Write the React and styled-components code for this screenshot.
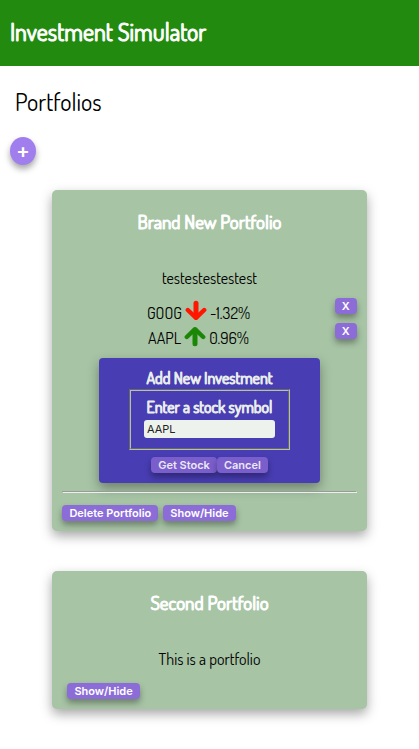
import React, { useState } from "react";
import styled, { createGlobalStyle } from "styled-components";

const GlobalStyle = createGlobalStyle`
  * { box-sizing: border-box; }
  body {
    margin: 0;
    background: #fff;
    color: #000;
    font-family: Dosis, "Liberation Sans Narrow", Lato, sans-serif;
    font-size: 16px;
    line-height: 20px;
  }
`;

const Header = styled.header`
  background: #228b0f;
  color: #fff;
  padding: 16px 10px 18px;
`;

const SiteTitle = styled.h1`
  margin: 0;
  font-size: 24px;
  line-height: 32px;
  font-weight: 400;
  -webkit-text-stroke: 1px;
`;

const PageTitle = styled.h2`
  margin: 20px 15px 19px;
  font-size: 24px;
  line-height: 32px;
  font-weight: 400;
`;

const Button = styled.button`
  height: 16px;
  padding: 0 7px;
  border: 0;
  border-radius: 4px;
  background: #8c6dd7;
  color: #fff;
  font: 600 11px/16px Inter, sans-serif;
  box-shadow: 0 4px 6px rgba(0, 0, 0, 0.35);
  cursor: pointer;
`;

const AddButton = styled(Button)`
  display: flex;
  align-items: center;
  justify-content: center;
  width: 26px;
  height: 28px;
  margin: 0 10px;
  padding: 0;
  border-radius: 50%;
  background: #a17eee;
  font-size: 20px;
`;

const CardList = styled.main`
  display: flex;
  flex-direction: column;
  align-items: center;
  gap: 40px;
  padding: 25px 0 40px;
`;

const Card = styled.section`
  width: 75%;
  padding: 19px 10px 10px;
  border-radius: 5px;
  background: #a7c4a5;
  box-shadow: 0 5px 12px rgba(0, 0, 0, 0.35);
`;

const CardTitle = styled.h3`
  margin: 0 0 34px;
  color: #fff;
  font-size: 19px;
  line-height: 26px;
  font-weight: 400;
  -webkit-text-stroke: 1px;
  text-align: center;
`;

const Description = styled.p`
  margin: 0;
  line-height: 18px;
  text-align: center;
`;

const Holdings = styled.ul`
  margin: 11px 0 10px;
  padding: 0;
  list-style: none;
`;

const Holding = styled.li`
  display: flex;
  align-items: flex-start;
  height: 25px;
`;

const Quote = styled.span`
  display: flex;
  flex: 1;
  align-items: center;
  justify-content: center;
  gap: 3px;
  height: 25px;
  padding-top: 4px;
`;

const ArrowIcon = styled.svg`
  width: 22px;
  height: 22px;
  margin-bottom: 4px;
  fill: none;
  stroke: ${(p) => (p.$up ? "#1c8707" : "#ff1500")};
  stroke-linecap: round;
  stroke-linejoin: round;
`;

const InvestmentForm = styled.form`
  display: flex;
  flex-direction: column;
  align-items: center;
  width: 75%;
  margin: 0 auto;
  padding: 9px 10px 10px;
  border-radius: 4px;
  background: #483db3;
  color: #e9eeec;
  box-shadow: 0 5px 12px rgba(0, 0, 0, 0.35);
`;

const FormTitle = styled.h4`
  margin: 0;
  font-size: 16px;
  line-height: 22px;
  font-weight: 400;
  -webkit-text-stroke: 1px;
`;

const FieldGroup = styled.fieldset`
  display: flex;
  flex-direction: column;
  align-items: center;
  gap: 2px;
  width: 80%;
  min-width: 0;
  margin: 0 0 7px;
  padding: 5px 10px 10px;
  border: 2px groove #b8beb6;
`;

const Label = styled.label`
  font-size: 16px;
  line-height: 22px;
  font-weight: 400;
  -webkit-text-stroke: 1px;
  white-space: nowrap;
`;

const SymbolInput = styled.input`
  width: 131px;
  height: 18px;
  padding: 0 3px;
  border: 0;
  border-radius: 3px;
  background: #edf2ec;
  color: #222;
  font: 11px/18px Inter, sans-serif;
`;

const FormActions = styled.div`
  display: flex;
  ${Button} { background: #7a5ecb; color: #eae8f6; }
`;

const Divider = styled.hr`
  margin: 8px 0 12px;
  border: 1px inset #eee;
`;

const CardActions = styled.footer`
  display: flex;
  gap: 5px;
  padding: ${(p) => (p.$inset ? "15px 5px 0" : "0")};
`;

const holdings = [
  { symbol: "GOOG", change: -1.32 },
  { symbol: "AAPL", change: 0.96 },
];

function Arrow({ up }) {
  return (
    <ArrowIcon viewBox="0 0 22 22" $up={up} aria-hidden="true">
      <path d={up ? "M11 18.7V5" : "M11 3.3V17"} strokeWidth="5" />
      <path d={up ? "M2.8 12L11 4.2L19.2 12" : "M2.8 10L11 17.8L19.2 10"} strokeWidth="4.4" />
    </ArrowIcon>
  );
}

export default function App() {
  const [symbol, setSymbol] = useState("AAPL");
  return (
    <>
      <GlobalStyle />
      <Header>
        <SiteTitle>Investment Simulator</SiteTitle>
      </Header>
      <PageTitle>Portfolios</PageTitle>
      <AddButton aria-label="Add portfolio">+</AddButton>
      <CardList>
        <Card>
          <CardTitle>Brand New Portfolio</CardTitle>
          <Description>testestestestest</Description>
          <Holdings>
            {holdings.map(({ symbol: name, change }) => (
              <Holding key={name}>
                <Quote>
                  {name}
                  <Arrow up={change > 0} />
                  {change}%
                </Quote>
                <Button aria-label={`Remove ${name}`}>X</Button>
              </Holding>
            ))}
          </Holdings>
          <InvestmentForm onSubmit={(e) => e.preventDefault()}>
            <FormTitle>Add New Investment</FormTitle>
            <FieldGroup>
              <Label htmlFor="symbol">Enter a stock symbol</Label>
              <SymbolInput id="symbol" value={symbol} onChange={(e) => setSymbol(e.target.value)} />
            </FieldGroup>
            <FormActions>
              <Button type="submit">Get Stock</Button>
              <Button type="button">Cancel</Button>
            </FormActions>
          </InvestmentForm>
          <Divider />
          <CardActions>
            <Button>Delete Portfolio</Button>
            <Button>Show/Hide</Button>
          </CardActions>
        </Card>
        <Card>
          <CardTitle>Second Portfolio</CardTitle>
          <Description>This is a portfolio</Description>
          <CardActions $inset>
            <Button>Show/Hide</Button>
          </CardActions>
        </Card>
      </CardList>
    </>
  );
}
